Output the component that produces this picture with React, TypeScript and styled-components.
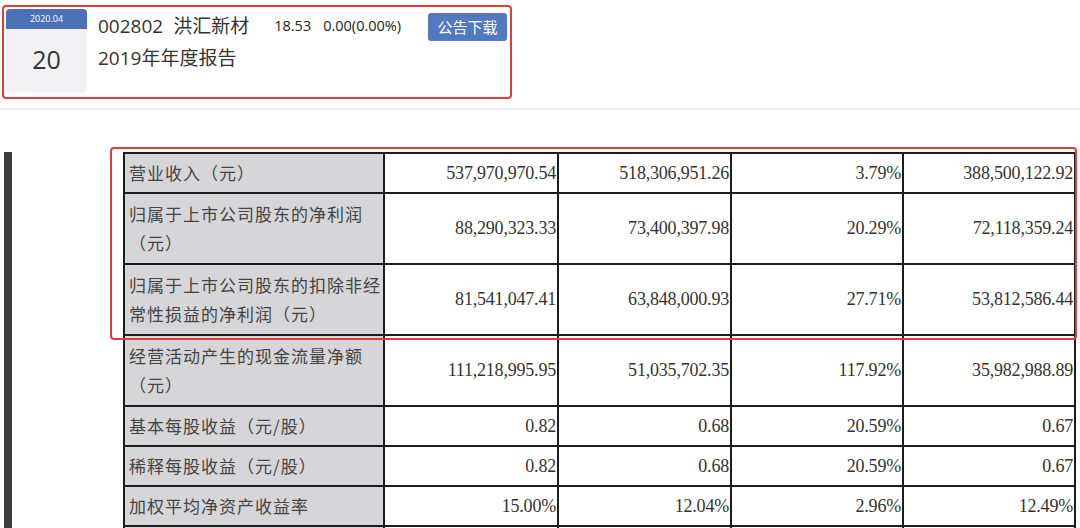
import React from 'react'
import styled, { createGlobalStyle } from 'styled-components'

const GlobalStyle = createGlobalStyle`
  html, body {
    margin: 0;
    padding: 0;
    background: #fff;
    overflow: hidden;
  }
  body {
    font-family: "Open Sans", "Noto Sans CJK SC", sans-serif;
    color: #333;
  }
`

const rows = [
  { label: ['营业收入（元）'], values: ['537,970,970.54', '518,306,951.26', '3.79%', '388,500,122.92'] },
  { label: ['归属于上市公司股东的净利润', '（元）'], values: ['88,290,323.33', '73,400,397.98', '20.29%', '72,118,359.24'] },
  { label: ['归属于上市公司股东的扣除非经', '常性损益的净利润（元）'], values: ['81,541,047.41', '63,848,000.93', '27.71%', '53,812,586.44'] },
  { label: ['经营活动产生的现金流量净额', '（元）'], values: ['111,218,995.95', '51,035,702.35', '117.92%', '35,982,988.89'] },
  { label: ['基本每股收益（元/股）'], values: ['0.82', '0.68', '20.59%', '0.67'] },
  { label: ['稀释每股收益（元/股）'], values: ['0.82', '0.68', '20.59%', '0.67'] },
  { label: ['加权平均净资产收益率'], values: ['15.00%', '12.04%', '2.96%', '12.49%'] },
  { label: [''], values: ['', '', '', ''] },
]

export default function App() {
  return (
    <>
      <GlobalStyle />
      <Header>
        <Card>
          <DateBox>
            <Month>2020.04</Month>
            <Day>20</Day>
          </DateBox>
          <Info>
            <TopLine>
              <Title>
                <span>002802</span>
                <span className="name">洪汇新材</span>
              </Title>
              <Price>
                <span>18.53</span>
                <span>0.00(0.00%)</span>
              </Price>
              <Download>公告下载</Download>
            </TopLine>
            <Report>2019年年度报告</Report>
          </Info>
        </Card>
      </Header>
      <Divider />
      <Section>
        <Bar />
        <TableWrap>
          <Highlight />
          <Table>
            <colgroup>
              <col style={{ width: 260 }} />
              <col style={{ width: 174 }} />
              <col style={{ width: 173 }} />
              <col style={{ width: 172 }} />
              <col style={{ width: 172 }} />
            </colgroup>
            <tbody>
              {rows.map((r, i) => (
                <Row key={i} $tall={r.label.length > 1}>
                  <Label>
                    {r.label.map((l, j) => (
                      <div key={j}>{l || '\u00a0'}</div>
                    ))}
                  </Label>
                  {r.values.map((v, j) => (
                    <Num key={j}>{v}</Num>
                  ))}
                </Row>
              ))}
            </tbody>
          </Table>
        </TableWrap>
      </Section>
    </>
  )
}

const Header = styled.div`
  padding: 5px 0 0 2px;
`
const Card = styled.div`
  display: flex;
  width: 502px;
  height: 86px;
  padding: 2px;
  border: 2px solid #e53a35;
  border-radius: 4px;
`
const DateBox = styled.div`
  width: 81px;
  height: 83px;
  display: flex;
  flex-direction: column;
  border-radius: 4px;
  overflow: hidden;
  background: #f1f1f3;
  box-shadow: 0 1px 2px rgba(0, 0, 0, 0.06);
`
const Month = styled.div`
  height: 20px;
  background: #4a70b6;
  color: #fff;
  font-size: 9px;
  line-height: 20px;
  text-align: center;
`
const Day = styled.div`
  flex: 1;
  display: flex;
  align-items: center;
  justify-content: center;
  padding-bottom: 4px;
  font-size: 25px;
  color: #333;
`
const Info = styled.div`
  flex: 1;
  display: flex;
  flex-direction: column;
  margin-left: 11px;
  padding-top: 5px;
`
const TopLine = styled.div`
  display: flex;
  align-items: flex-start;
`
const Title = styled.div`
  font-size: 19px;
  line-height: 24px;
  color: #333;
  .name {
    margin-left: 10px;
  }
`
const Price = styled.div`
  margin-left: 25px;
  font-size: 14.5px;
  line-height: 24px;
  color: #222;
  span + span {
    margin-left: 12px;
  }
`
const Download = styled.div`
  margin-left: auto;
  margin-right: 1px;
  margin-top: -1px;
  width: 79px;
  height: 28px;
  border-radius: 3px;
  background: #5279bf;
  color: #fff;
  font-size: 15px;
  line-height: 28px;
  text-align: center;
`
const Report = styled.div`
  margin-top: 5px;
  font-size: 19px;
  line-height: 24px;
  color: #333;
`
const Divider = styled.div`
  margin-top: 9px;
  height: 2px;
  background: #eeeeee;
`
const Section = styled.div`
  display: flex;
  margin-top: 42px;
`
const Bar = styled.div`
  width: 8px;
  margin-left: 4px;
  background: #3c3c3c;
`
const TableWrap = styled.div`
  position: relative;
  margin-left: 111px;
`
const Highlight = styled.div`
  position: absolute;
  left: -13px;
  top: -5px;
  width: 963px;
  height: 189px;
  border: 2.5px solid #e53a35;
  border-radius: 4px;
  pointer-events: none;
  z-index: 2;
`
const Table = styled.table`
  border-collapse: collapse;
  table-layout: fixed;
  width: 951px;
`
const Row = styled.tr<{ $tall: boolean }>`
  height: ${p => (p.$tall ? 71 : 40)}px;
  td {
    border: 2px solid #1c1c1c;
  }
`
const Label = styled.td`
  background: #d6d6d8;
  padding: 0 4px 2px;
  font-family: "Noto Sans CJK SC", sans-serif;
  font-weight: 400;
  font-size: 17px;
  letter-spacing: 1px;
  line-height: 29px;
  color: #444;
  white-space: nowrap;
  vertical-align: middle;
`
const Num = styled.td`
  padding: 0 1px 0 0;
  font-family: "Liberation Serif", serif;
  font-size: 18px;
  color: #333;
  text-align: right;
  letter-spacing: -0.2px;
  vertical-align: middle;
  white-space: nowrap;
`
